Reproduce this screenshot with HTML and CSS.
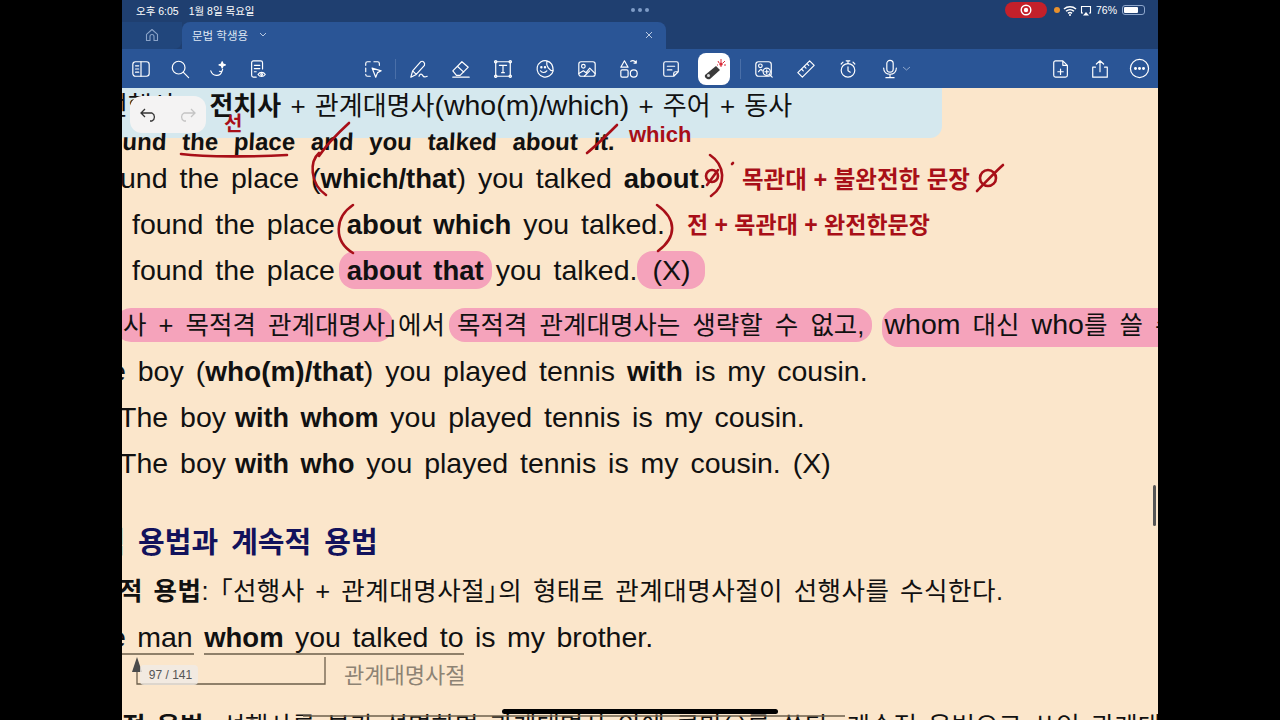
FILE: index.html
```html
<!DOCTYPE html>
<html lang="ko">

<head>
    <meta charset="UTF-8">
    <title>문법 학생용</title>
    <link rel="stylesheet" href="styles.css">
</head>

<body>
    <div class="screen">
        <div class="status">
            <span class="time">오후 6:05</span>
            <span class="date">1월 8일 목요일</span>
            <div class="dots"><i></i><i></i><i></i></div>
            <div class="status-right">
                <div class="rec">
                    <svg width="12" height="12" viewBox="0 0 12 12"><circle cx="6" cy="6" r="4.800" fill="none" stroke="#fff" stroke-width="1.400"/><circle cx="6" cy="6" r="2.200" fill="#fff"/></svg>
                </div>
                <i class="orange"></i>
                <svg class="st" width="14" height="11" viewBox="0 0 14 11"><path d="M1 4a9 9 0 0 1 12 0M3 6.300a6 6 0 0 1 8 0M5 8.400a3 3 0 0 1 4 0" fill="none" stroke="#fff" stroke-width="1.500"/><circle cx="7" cy="10" r="1" fill="#fff"/></svg>
                <svg class="st" width="12" height="11" viewBox="0 0 12 11"><path d="M3 8H1.500V1.500h9V8H9" fill="none" stroke="#fff" stroke-width="1.100"/><path d="M3 10.500h6L6 7z" fill="#fff"/></svg>
                <span class="pct">76%</span>
                <div class="batt"><div class="batt-fill"></div></div>
            </div>
        </div>

        <div class="tabs">
            <div class="home-tab">
                <svg width="14" height="14" viewBox="0 0 14 14"><path d="M1.500 12.500V6.300L7 1.500l5.500 4.800v6.200H9V8.500a2 2 0 0 0-4 0v4z" fill="none" stroke="#8aa3c8" stroke-width="1.100" stroke-linejoin="round"/></svg>
            </div>
            <div class="tab">
                <span>문법 학생용</span>
                <svg class="tab-chev" width="8" height="5" viewBox="0 0 8 5"><path d="M1 1l3 3 3-3" fill="none" stroke="#b9c9e2" stroke-width="1"/></svg>
                <svg class="tab-x" width="8" height="8" viewBox="0 0 8 8"><path d="M1 1l6 6M7 1L1 7" stroke="#b9c9e2" stroke-width="1"/></svg>
            </div>
        </div>

        <div class="toolbar">
            <div class="tool-group">
                <svg class="ico" viewBox="0 0 22 22"><rect x="2" y="3" width="18" height="16" rx="3"/><path d="M11 3v16M5 7.500h3.500M5 11h3.500M5 14.500h3.500"/></svg>
                <svg class="ico" viewBox="0 0 22 22"><circle cx="9.500" cy="9.500" r="7"/><path d="M14.500 14.500L20.500 20.500"/></svg>
                <svg class="ico" viewBox="0 0 22 22"><path d="M2 13c2 6 10 7 12 1M14 14l-2.500-.5M14 14l1-2.500"/><path d="M14.500 3l1 2.500 2.500 1-2.500 1-1 2.500-1-2.500-2.500-1 2.500-1z" fill="#fff"/></svg>
                <svg class="ico" viewBox="0 0 22 22"><path d="M9 20H6a2 2 0 0 1-2-2V4a2 2 0 0 1 2-2h8a2 2 0 0 1 2 2v7M7 7h6M7 10.500h6M7 14h2"/><path d="M11 17c2-3 6-3 8 0-2 3-6 3-8 0z"/><circle cx="15" cy="17" r="1"/></svg>
            </div>
            <div class="tool-group draw">
                <svg class="ico" viewBox="0 0 22 22"><path d="M8 3H5a2 2 0 0 0-2 2v2M12 3h4a2 2 0 0 1 2 2v2M3 10v4M3 17a2 2 0 0 0 2 2h3M10 10l10 3-4 2-2 5z"/></svg>
                <i class="sep"></i>
                <svg class="ico" viewBox="0 0 22 22"><path d="M2 20l2-7L13 3c2-1.500 5 1 4 4l-9 10zM4 13l4 4M11 19c1-3 3-3 4-1s3 2 5 1"/></svg>
                <svg class="ico" viewBox="0 0 22 22"><path d="M2 13L12 3l7 6-9 9H6zM7 8l7 6.500M2 20h18"/></svg>
                <svg class="ico" viewBox="0 0 22 22"><rect x="3" y="3" width="16" height="16"/><circle cx="3" cy="3" r="1.300"/><circle cx="19" cy="3" r="1.300"/><circle cx="3" cy="19" r="1.300"/><circle cx="19" cy="19" r="1.300"/><path d="M7 7h8M11 7v8M9.500 15h3"/></svg>
                <svg class="ico" viewBox="0 0 22 22"><path d="M13 2a9 9 0 1 0 7 11c-4 0-8-5-7-11zM13 2c4 1 7 5 7 11"/><circle cx="7" cy="9" r=".7"/><circle cx="11" cy="9" r=".7"/><path d="M6 13c1.500 2.500 5 2.500 7 0"/></svg>
                <svg class="ico" viewBox="0 0 22 22"><rect x="2" y="3" width="18" height="16" rx="2.500"/><circle cx="7" cy="8" r="2"/><path d="M2 16l5-3 3 2 4-5 6 6M8 19l6-6"/></svg>
                <svg class="ico" viewBox="0 0 22 22"><path d="M6 2l4 7H2zM13 2.500c2-1.500 5-.5 6 2M19 4.500V2M19 4.500h-2.500"/><rect x="2" y="12" width="8" height="8" rx="1.500"/><rect x="12.500" y="12" width="7.500" height="8" rx="3.700"/></svg>
                <svg class="ico" viewBox="0 0 22 22"><path d="M5 3h12a2 2 0 0 1 2 2v9l-5 5H5a2 2 0 0 1-2-2V5a2 2 0 0 1 2-2zM7 8h8M7 12h5M14 19v-3a2 2 0 0 1 2-2h3"/></svg>
                <div class="laser">
                    <svg width="26" height="26" viewBox="0 0 26 26"><path d="M4 19L15 10l4 4-10 9c-2 1-6-1-5-4z" fill="#3a3a3a"/><circle cx="7.500" cy="19.500" r="1.500" fill="#ddd"/><path d="M18 7l-1-2M20 6V3M22 7l2-2M23 9h2M17 9h-1M20 11V9" stroke="#d92b3a" stroke-width="1"/><circle cx="20" cy="8" r="1.800" fill="#d92b3a"/></svg>
                </div>
                <i class="sep"></i>
                <svg class="ico" viewBox="0 0 22 22"><rect x="2" y="3" width="17" height="16" rx="3"/><circle cx="7" cy="7.500" r="2"/><path d="M5 14c2-4 4-2 4-1"/><circle cx="14" cy="14" r="4" fill="#2a5596"/><path d="M12 14h4M14 12v4M17 17l3 3"/></svg>
                <svg class="ico" viewBox="0 0 22 22"><path d="M2 15L15 2l5 5L7 20zM6 11l2 2M9 8l2 2M12 5l2 2"/></svg>
                <svg class="ico" viewBox="0 0 22 22"><circle cx="11" cy="12.500" r="7.500"/><path d="M9 2h4M11 2v3M11 8.500v4.500l2.500 1.500M3.500 5.500l2-2M18.500 5.500l-2-2"/></svg>
                <div class="mic">
                    <svg class="ico" viewBox="0 0 22 22"><rect x="7.500" y="1.500" width="7" height="13" rx="3.500"/><path d="M4 10c0 9 14 9 14 0M11 17v3M6.500 20.500h9"/></svg>
                    <svg class="mic-chev" width="9" height="5" viewBox="0 0 9 5"><path d="M1 1l3.500 3L8 1" fill="none" stroke="#8ea6cb" stroke-width="1"/></svg>
                </div>
            </div>
            <div class="tool-group end">
                <svg class="ico" viewBox="0 0 22 22"><path d="M5 2h8l5 5v11a2 2 0 0 1-2 2H5a2 2 0 0 1-2-2V4a2 2 0 0 1 2-2zM13 2v5h5M7.500 14h6M10.500 11v6"/></svg>
                <svg class="ico" viewBox="0 0 22 22"><path d="M6 9H3v11h16V9h-3M11 14V2M7 5.500L11 2l4 3.500"/></svg>
                <svg class="ico big" viewBox="0 0 22 22"><circle cx="11" cy="11" r="9.500"/><circle cx="6.800" cy="11" r=".9" fill="#fff"/><circle cx="11" cy="11" r=".9" fill="#fff"/><circle cx="15.200" cy="11" r=".9" fill="#fff"/></svg>
            </div>
        </div>

        <div class="doc">
            <div class="blue-box">
                <p class="line first">선행사 + <b>전치사</b> + 관계대명사<span class="en">(who(m)/which)</span> + 주어 + 동사</p>
            </div>
            <p class="line hand-line">ound the place and you talked about it.</p>
            <p class="line l3">und the place (<b>which/that</b>) you talked <b>about</b>.</p>
            <p class="line l4">found the place <b>about which</b> you talked.</p>
            <p class="line l4">found the place <span class="hl"><b>about that</b></span> you talked. <span class="hl x">(X)</span></p>
            <p class="line l6"><span class="hl">사 + 목적격 관계대명사</span>」에서 <span class="hl">목적격 관계대명사는 생략할 수 없고,</span> <span class="hl low"><span class="en">whom</span> 대신 <span class="en">who</span>를 쓸 수 없다.</span></p>
            <p class="line l7">e boy (<b>who(m)/that</b>) you played tennis <b>with</b> is my cousin.</p>
            <p class="line l8">The boy <b>with whom</b> you played tennis is my cousin.</p>
            <p class="line l8">The boy <b>with who</b> you played tennis is my cousin. (X)</p>
            <h2 class="sub">한정적 용법과 계속적 용법</h2>
            <p class="line l10"><b>적 용법</b>: 「선행사 + 관계대명사절」의 형태로 관계대명사절이 선행사를 수식한다.</p>
            <p class="line l11">e man <b>whom</b> you talked to is my brother.</p>
            <p class="label">관계대명사절</p>
            <p class="line l13"><b>적 용법</b>: 선행사를 부가 설명하며 관계대명사 앞에 콤마(,)를 쓴다. 계속적 용법으로 쓰인 관계대</p>

            <!-- 손글씨 -->
            <svg class="ink" width="1036" height="632" viewBox="0 0 1036 632">
                <g fill="none" stroke="#a80f18" stroke-width="2.600" stroke-linecap="round" stroke-linejoin="round">
                    <path d="M59 66c25 3 75 3 106 1"/>
                    <path d="M197 68c8-12 18-22 30-33"/>
                    <path d="M465 65c10-8 20-18 30-28"/>
                    <path d="M197 65c-9 8-10 30 7 42"/>
                    <path d="M231 117c-18 12-20 36 0 48"/>
                    <path d="M535 117c20 14 20 32 1 46"/>
                    <path d="M588 67c15 10 17 30 1 41"/>
                    <circle cx="590" cy="88" r="6"/>
                    <path d="M585 97l11-15"/>
                    <path d="M610 76l1-1"/>
                    <circle cx="866" cy="90" r="8"/>
                    <path d="M855 103c8-8 17-18 26-26"/>
                </g>
                <g fill="none" stroke="#6c5f4b" stroke-width="1.300">
                    <path d="M0 566h72M82 566h260"/>
                    <path d="M203 569v27H15v-14"/>
                    <path d="M181 628h542" stroke-width="1.600"/>
                </g>
                <path d="M15 569l-5 15h10z" fill="#4a4a4a"/>
            </svg>
            <span class="red r-sun">선</span>
            <span class="red r-which">which</span>
            <span class="red r-1">목관대 + 불완전한 문장</span>
            <span class="red r-2">전 + 목관대 + 완전한문장</span>
        </div>

        <div class="undo">
            <svg width="20" height="16" viewBox="0 0 20 16"><path d="M6 2L2 6l4 4M2 6h11a4.500 4.500 0 0 1 0 8h-2" fill="none" stroke="#333" stroke-width="1.300"/></svg>
            <svg width="20" height="16" viewBox="0 0 20 16"><path d="M14 2l4 4-4 4M18 6H7a4.500 4.500 0 0 0 0 8h2" fill="none" stroke="#c4c4c4" stroke-width="1.300"/></svg>
        </div>
        <div class="page-num">97 / 141</div>
        <div class="scroll"></div>
        <div class="home-bar"></div>
    </div>
</body>

</html>
```

FILE: styles.css
```css
* {
    margin: 0;
    padding: 0;
    box-sizing: border-box;
}

body {
    background-color: black;
    font-family: "Liberation Sans", "Noto Sans CJK KR", sans-serif;
    overflow: hidden;
}

.screen {
    position: relative;
    width: 1036px;
    height: 720px;
    margin-left: 122px;
    overflow: hidden;
    background-color: #fbe6cb;
}

/* status bar */
.status {
    display: flex;
    align-items: center;
    height: 22px;
    padding: 0 13px 2px 14px;
    background-color: #1f3f70;
    color: white;
    font-size: 10.500px;
}

.date {
    margin-left: 10px;
}

.dots {
    display: flex;
    gap: 3px;
    position: absolute;
    left: 509px;
    top: 8px;
}

.dots i {
    width: 4px;
    height: 4px;
    border-radius: 50%;
    background-color: #7f9cc7;
}

.status-right {
    display: flex;
    align-items: center;
    margin-left: auto;
}

.rec {
    display: flex;
    align-items: center;
    justify-content: center;
    width: 42px;
    height: 16px;
    border-radius: 8px;
    background-color: #c4202a;
}

.orange {
    width: 6px;
    height: 6px;
    margin-left: 7px;
    border-radius: 50%;
    background-color: #e8912d;
}

.st {
    margin-left: 3px;
}

.pct {
    margin-left: 4px;
}

.batt {
    width: 23px;
    height: 10px;
    margin-left: 5px;
    padding: 1px;
    border: 1px solid #8ea6cb;
    border-radius: 3px;
}

.batt-fill {
    width: 76%;
    height: 100%;
    border-radius: 1px;
    background-color: white;
}

/* tabs */
.tabs {
    display: flex;
    height: 27px;
    background-color: #1f3f70;
}

.home-tab {
    display: flex;
    align-items: center;
    justify-content: center;
    width: 60px;
    padding-bottom: 2px;
    border-bottom-right-radius: 8px;
    background-color: #21467c;
}

.tab {
    display: flex;
    align-items: center;
    width: 484px;
    padding-left: 10px;
    padding-bottom: 2px;
    border-radius: 8px 8px 0 0;
    background-color: #2a5596;
    color: #dfe7f3;
    font-size: 11.500px;
}

.tab-chev {
    margin-left: 11px;
}

.tab-x {
    margin-left: auto;
    margin-right: 13px;
}

/* toolbar */
.toolbar {
    position: relative;
    display: flex;
    align-items: center;
    height: 39px;
    background-color: #2a5596;
}

.tool-group {
    display: flex;
    align-items: center;
    gap: 19px;
    padding-left: 9px;
}

.tool-group.draw {
    position: absolute;
    left: 232px;
    gap: 22px;
}

.tool-group.end {
    position: absolute;
    right: 8px;
}

.ico {
    width: 20px;
    height: 20px;
    flex: none;
    fill: none;
    stroke: white;
    stroke-width: 1.300;
    stroke-linecap: round;
    stroke-linejoin: round;
}

.ico.big {
    width: 21px;
    height: 21px;
}

.sep {
    width: 1px;
    height: 20px;
    margin: 0 -9px 0 -10px;
    background-color: #4a6fa8;
}

.laser {
    display: flex;
    align-items: center;
    justify-content: center;
    width: 32px;
    height: 32px;
    margin: 0 -2px 0 -5px;
    border-radius: 8px;
    background-color: white;
}

.mic {
    display: flex;
    align-items: center;
    gap: 2px;
    width: 20px;
}

.mic-chev {
    flex: none;
}

/* document */
.doc {
    position: relative;
    height: 632px;
    overflow: hidden;
    color: #111;
}

.blue-box {
    width: 820px;
    height: 50px;
    border-bottom-right-radius: 12px;
    background-color: #d5e8ee;
}

.line {
    height: 46px;
    font-size: 28.500px;
    line-height: 46px;
    white-space: nowrap;
    word-spacing: 4px;
}

.line b {
    font-size: 27.500px;
}

.en {
    font-size: 28.500px;
}

.first {
    height: 34px;
    margin-left: -18px;
    font-size: 26px;
    line-height: 34px;
    word-spacing: 2px;
}

.first b {
    font-size: 26px;
}

.hand-line {
    height: 31px;
    margin-top: -14px;
    margin-left: -14px;
    font-weight: bold;
    font-size: 24px;
    line-height: 36px;
    word-spacing: 9px;
    transform: skewX(-3deg);
}

.l3 {
    margin-left: -2px;
}

.l4 {
    padding-left: 10px;
}

.l6 {
    margin-top: 8px;
    margin-left: 1px;
    font-size: 25.500px;
    font-feature-settings: "palt";
    word-spacing: 5px;
}

.l7 {
    margin-top: 1px;
    margin-left: -12px;
}

.l7 b {
    font-size: 28px;
}

.l8 {
    margin-left: -3px;
}

.l8 b {
    margin-left: -3px;
    font-size: 27px;
}

.hl {
    padding: 3px 8px;
    margin: 0 -8px;
    border-radius: 16px;
    background-color: #f5a3bb;
}

.hl.x {
    margin: 0 0 0 -12px;
    padding: 3px 15px;
}

.hl.low {
    margin: 0 0 0 6px;
    padding: 3px 2px 8px;
}

.sub {
    height: 40px;
    margin-top: 37px;
    margin-left: -77px;
    color: #12125c;
    font-size: 29px;
    font-weight: bold;
    line-height: 40px;
    word-spacing: 5px;
    white-space: nowrap;
}

.l10 {
    margin-top: 5px;
    margin-left: -3px;
    font-size: 25.500px;
    font-feature-settings: "palt";
    letter-spacing: 0.5px;
    word-spacing: 3px;
}

.l10 b {
    font-size: 25.500px;
}

.l11 {
    margin-left: -12px;
    word-spacing: 3.500px;
}

.label {
    height: 32px;
    padding-left: 222px;
    color: #8d8374;
    font-size: 22px;
    line-height: 32px;
}

.l13 {
    margin-top: 11px;
    font-size: 25.500px;
}

.l13 b {
    font-size: 25.500px;
}

/* handwriting on top of the page */
.ink {
    position: absolute;
    left: 0;
    top: 0;
}

.red {
    position: absolute;
    color: #a80f18;
    font-weight: bold;
    white-space: nowrap;
}

.r-sun {
    left: 102px;
    top: 20px;
    font-size: 20px;
}

.r-which {
    left: 507px;
    top: 34px;
    font-size: 22px;
}

.r-1 {
    left: 620px;
    top: 73px;
    font-size: 23.500px;
}

.r-2 {
    left: 565px;
    top: 118px;
    font-size: 23px;
}

/* floating stuff */
.undo {
    position: absolute;
    left: 8px;
    top: 96px;
    display: flex;
    align-items: center;
    justify-content: space-around;
    width: 76px;
    height: 37px;
    border-radius: 12px;
    background-color: #f4f3f3;
}

.page-num {
    position: absolute;
    left: 18px;
    top: 665px;
    width: 58px;
    height: 20px;
    padding-left: 3px;
    color: #555;
    font-size: 12px;
    line-height: 20px;
    text-align: center;
    background-color: rgba(240, 235, 230, 0.8);
    border-radius: 4px;
}

.scroll {
    position: absolute;
    left: 1031px;
    top: 485px;
    width: 3px;
    height: 41px;
    border-radius: 2px;
    background-color: #555;
}

.home-bar {
    position: absolute;
    left: 380px;
    top: 709px;
    width: 276px;
    height: 5px;
    border-radius: 3px;
    background-color: black;
}
```
